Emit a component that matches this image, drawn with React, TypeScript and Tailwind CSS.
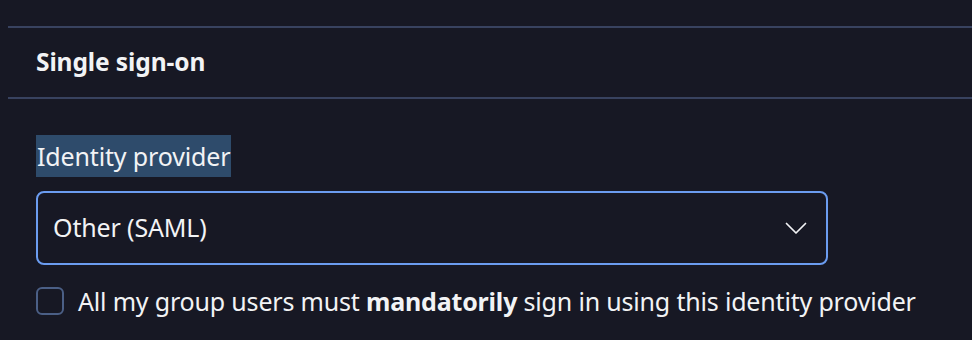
export default function App() {
  return (
    <div
      className="h-[340px] w-[972px] overflow-hidden bg-[#171824] pl-2 pt-[26px] text-[#f2f3f5]"
      style={{ fontFamily: '"Noto Sans", sans-serif' }}
    >
      {/* Section header */}
      <div className="flex h-[73px] items-center border-y-2 border-[#38425f] pl-7">
        <h2 className="text-[24.5px] font-bold leading-none tracking-[-0.1px]">Single sign-on</h2>
      </div>

      <div className="flex flex-col pl-7 pt-[36px]">
        <label className="self-start bg-[#2e4b6b] px-px py-[7px] text-[25px] leading-[28px] tracking-[-0.15px]">
          Identity provider
        </label>

        <button className="mt-[14px] flex h-[74px] w-[792px] items-center justify-between rounded-lg border-2 border-[#6b9cf0] bg-[#171824] pl-[15px] pr-[19px] text-[25px] tracking-[-0.15px]">
          <span>Other (SAML)</span>
          <svg width="22" height="13" viewBox="0 0 22 13" fill="none" stroke="currentColor" strokeWidth="1.7" strokeLinecap="round" strokeLinejoin="round">
            <path d="M1.5 1.5 11 11 20.5 1.5" />
          </svg>
        </button>

        <label className="mt-[22px] flex items-center gap-[14px]">
          <span className="h-7 w-7 shrink-0 rounded-[6px] border-2 border-[#4b5f86]" />
          <span className="text-[25px] leading-7 tracking-[-0.18px]">
            All my group users must <b className="font-bold">mandatorily</b> sign in using this identity provider
          </span>
        </label>
      </div>
    </div>
  );
}
